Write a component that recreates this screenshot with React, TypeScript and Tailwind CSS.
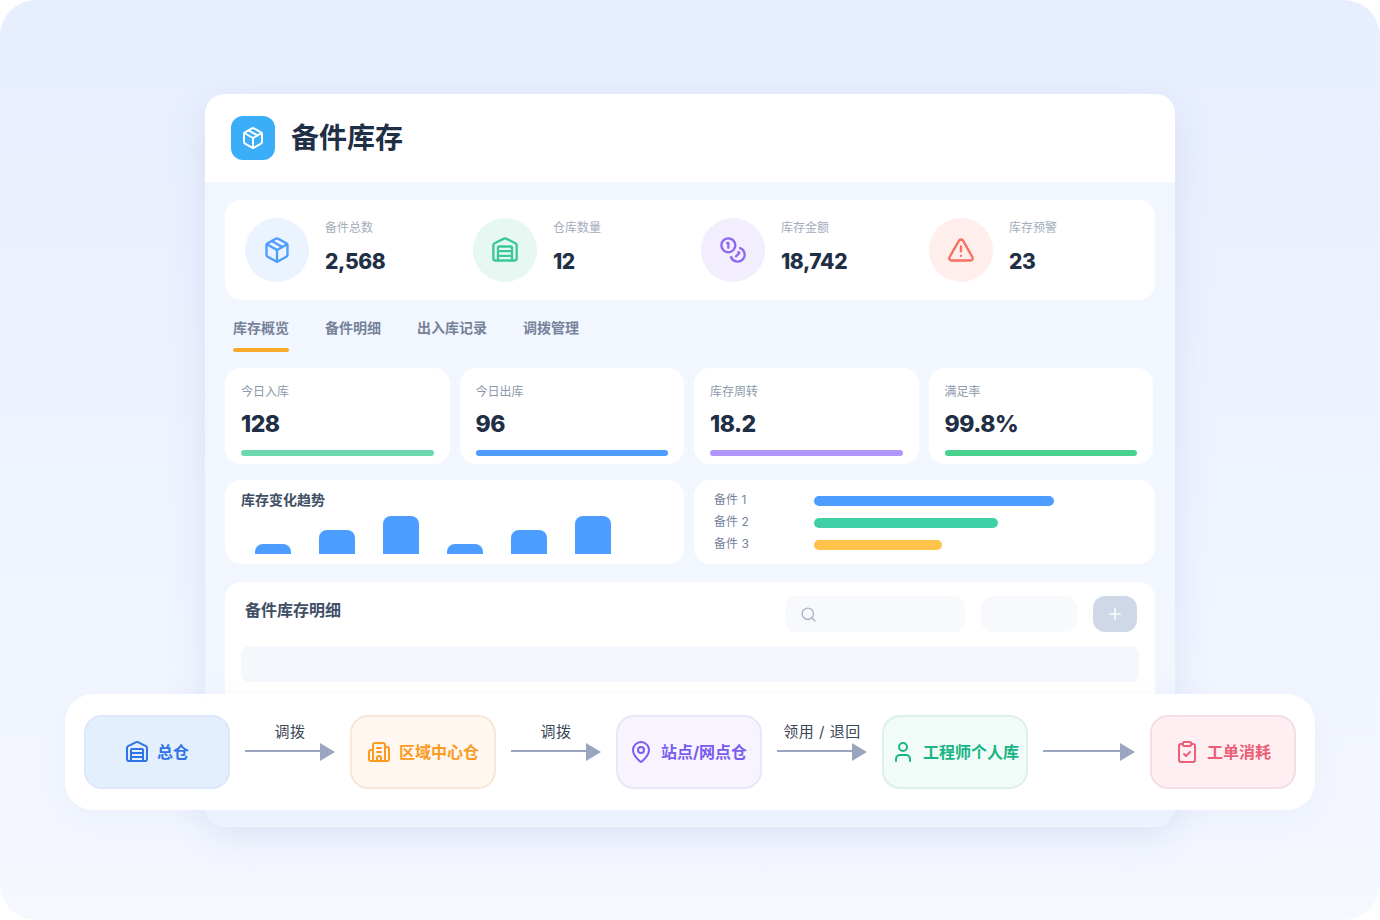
import { Building2, ClipboardCheck, Coins, MapPin, Package, Plus, Search, TriangleAlert, User, Warehouse } from 'lucide-react';

const font = { fontFamily: 'Inter, "Noto Sans CJK SC", sans-serif' };

const stats = [
  { label: '备件总数', value: '2,568', Icon: Package, circle: 'bg-[#ebf3fe]', color: 'text-[#4c9dff]' },
  { label: '仓库数量', value: '12', Icon: Warehouse, circle: 'bg-[#e7f8f2]', color: 'text-[#3cc796]' },
  { label: '库存金额', value: '18,742', Icon: Coins, circle: 'bg-[#f2eefe]', color: 'text-[#8f68f0]' },
  { label: '库存预警', value: '23', Icon: TriangleAlert, circle: 'bg-[#ffeeec]', color: 'text-[#f8705f]' },
];

const metrics = [
  { label: '今日入库', value: '128', bar: 'bg-[#6dd8ad]' },
  { label: '今日出库', value: '96', bar: 'bg-[#4c9dff]' },
  { label: '库存周转', value: '18.2', bar: 'bg-[#b197fc]' },
  { label: '满足率', value: '99.8%', bar: 'bg-[#48d28d]' },
];

const tabs = ['库存概览', '备件明细', '出入库记录', '调拨管理'];

const nodes = [
  { label: '总仓', Icon: Warehouse, box: 'bg-[#e4effe] border-[#dce8f9]', color: 'text-[#2f73e6]' },
  { label: '区域中心仓', Icon: Building2, box: 'bg-[#fff7f0] border-[#f6e8d9]', color: 'text-[#fb9a1f]' },
  { label: '站点/网点仓', Icon: MapPin, box: 'bg-[#f7f4ff] border-[#ebe5fa] pr-[2px]', color: 'text-[#7b5cf0]' },
  { label: '工程师个人库', Icon: User, box: 'bg-[#f1fbf7] border-[#dff0e9]', color: 'text-[#18b586]' },
  { label: '工单消耗', Icon: ClipboardCheck, box: 'bg-[#ffeff2] border-[#f5dfe4]', color: 'text-[#ec5f76]' },
];

function Connector({ label, last }: { label: string; last?: boolean }) {
  return (
    <div className={`flex h-[74px] shrink-0 flex-col items-start ${last ? 'w-[122px]' : 'w-[120px]'} pl-[15px]`}>
      <div className="flex h-[28px] w-[90px] items-end justify-center whitespace-nowrap pb-[1px] text-[15px] leading-5 tracking-[0.5px] text-[#3a4759]">{label}</div>
      <div className="flex h-[18px] items-center">
        <div className={`mb-[2px] h-[2px] ${last ? 'w-[77px]' : 'w-[75px]'} bg-[#9aa6bf]`} />
        <svg width="15" height="18" viewBox="0 0 15 18" className="text-[#9aa6bf]">
          <path d="M0 0L15 9L0 18Z" fill="currentColor" />
        </svg>
      </div>
    </div>
  );
}

export default function App() {
  return (
    <div className="h-[920px] w-[1380px] overflow-hidden bg-white" style={font}>
      <div className="relative h-[920px] w-[1380px] overflow-hidden rounded-[36px] bg-gradient-to-b from-[#e7eefe] to-[#f5f8ff] pt-[94px]">
        <div className="mx-auto h-[733px] w-[970px] overflow-hidden rounded-[20px] bg-[#f1f6ff] shadow-[0_12px_40px_rgba(80,110,180,0.12)]">
          <header className="flex h-[88px] items-center gap-4 bg-white pl-[26px]">
            <div className="flex h-11 w-11 items-center justify-center rounded-xl bg-[#3aaef8] text-white">
              <Package size={24} strokeWidth={2} />
            </div>
            <h1 className="pb-[1px] text-[28px] font-bold text-[#1f2f46]">备件库存</h1>
          </header>

          <div className="px-5 pt-[18px]">
            <div className="flex h-[100px] items-center rounded-2xl bg-white pl-5">
              {stats.map(({ label, value, Icon, circle, color }) => (
                <div key={label} className="flex w-[228px] shrink-0 items-center gap-4">
                  <div className={`flex h-16 w-16 items-center justify-center rounded-full ${circle} ${color}`}>
                    <Icon size={28} strokeWidth={2} />
                  </div>
                  <div className="pb-[7px]">
                    <div className="text-xs leading-5 text-[#a3adbd]">{label}</div>
                    <div className="mt-[10px] text-[21px] leading-7 font-extrabold tracking-[-0.4px] text-[#1f2f46]">{value}</div>
                  </div>
                </div>
              ))}
            </div>

            <div className="flex h-[68px] gap-9 pl-2">
              {tabs.map((tab, i) => (
                <div key={tab} className="pt-[18px]">
                  <div className="text-sm leading-5 font-bold text-[#76839a]">{tab}</div>
                  {i === 0 && <div className="mt-[10px] h-1 rounded-full bg-[#fbab2c]" />}
                </div>
              ))}
            </div>

            <div className="grid w-[928px] grid-cols-4 gap-[10px]">
              {metrics.map((m) => (
                <div key={m.label} className="h-24 rounded-2xl bg-white px-4 pt-[15px]">
                  <div className="text-xs leading-[18px] text-[#8d99ab]">{m.label}</div>
                  <div className="mt-[7px] text-[23px] leading-8 font-extrabold tracking-[-0.5px] text-[#1f2f46]">{m.value}</div>
                  <div className={`mt-[10px] h-[6px] rounded-full ${m.bar}`} />
                </div>
              ))}
            </div>

            <div className="mt-4 flex gap-[10px]">
              <div className="h-[84px] w-[459px] rounded-2xl bg-white px-4 pt-[10px]">
                <div className="text-sm leading-5 font-bold text-[#3f4f66]">库存变化趋势</div>
                <div className="mt-[4px] flex h-[40px] items-end gap-7 pl-[14px]">
                  {[10, 24, 38, 10, 24, 38].map((h, i) => (
                    <div key={i} className="w-9 rounded-t-lg bg-[#4c9dff]" style={{ height: h }} />
                  ))}
                </div>
              </div>
              <div className="flex h-[84px] w-[461px] flex-col gap-3 rounded-2xl bg-white pt-4 pl-5">
                {[
                  { label: '备件 1', w: 240, c: 'bg-[#4c9dff]' },
                  { label: '备件 2', w: 184, c: 'bg-[#3fd1a5]' },
                  { label: '备件 3', w: 128, c: 'bg-[#ffc24b]' },
                ].map((r) => (
                  <div key={r.label} className="flex h-[10px] items-center">
                    <div className="w-[100px] pb-[2px] text-xs leading-[10px] text-[#76839a]">{r.label}</div>
                    <div className={`h-[10px] rounded-full ${r.c}`} style={{ width: r.w }} />
                  </div>
                ))}
              </div>
            </div>

            <div className="mt-[18px] h-[200px] rounded-2xl bg-white px-4 pt-[14px]">
              <div className="flex h-9 items-center">
                <div className="flex-1 pb-[8px] pl-1 text-base leading-5 font-bold text-[#3f4f66]">备件库存明细</div>
                <div className="flex h-9 w-[180px] items-center rounded-xl bg-[#f7f9fd] pl-[15px] text-[#a9b5c6]">
                  <Search size={17} />
                </div>
                <div className="ml-4 h-9 w-24 rounded-xl bg-[#f7f9fd]" />
                <div className="mr-[2px] ml-4 flex h-9 w-11 items-center justify-center rounded-xl bg-[#cfd8e6] text-white">
                  <Plus size={18} />
                </div>
              </div>
              <div className="mt-[14px] h-9 rounded-lg bg-[#f4f7fc]" />
            </div>
          </div>
        </div>

        <div className="absolute top-[694px] left-[65px] flex h-[116px] w-[1250px] items-center rounded-[28px] bg-white/95 pl-[19px] shadow-[0_8px_32px_rgba(90,120,190,0.06)]">
          {nodes.map(({ label, Icon, box, color }, i) => (
            <div key={label} className="flex items-center">
              <div className={`flex h-[74px] w-[146px] items-center justify-center gap-2 rounded-[18px] border-2 text-base font-bold ${box} ${color}`}>
                <Icon size={24} strokeWidth={2} className="shrink-0" />
                <span className="whitespace-nowrap">{label}</span>
              </div>
              {i === 0 && <Connector label="调拨" />}
              {i === 1 && <Connector label="调拨" />}
              {i === 2 && <Connector label="领用 / 退回" />}
              {i === 3 && <Connector label="" last />}
            </div>
          ))}
        </div>
      </div>
    </div>
  );
}
